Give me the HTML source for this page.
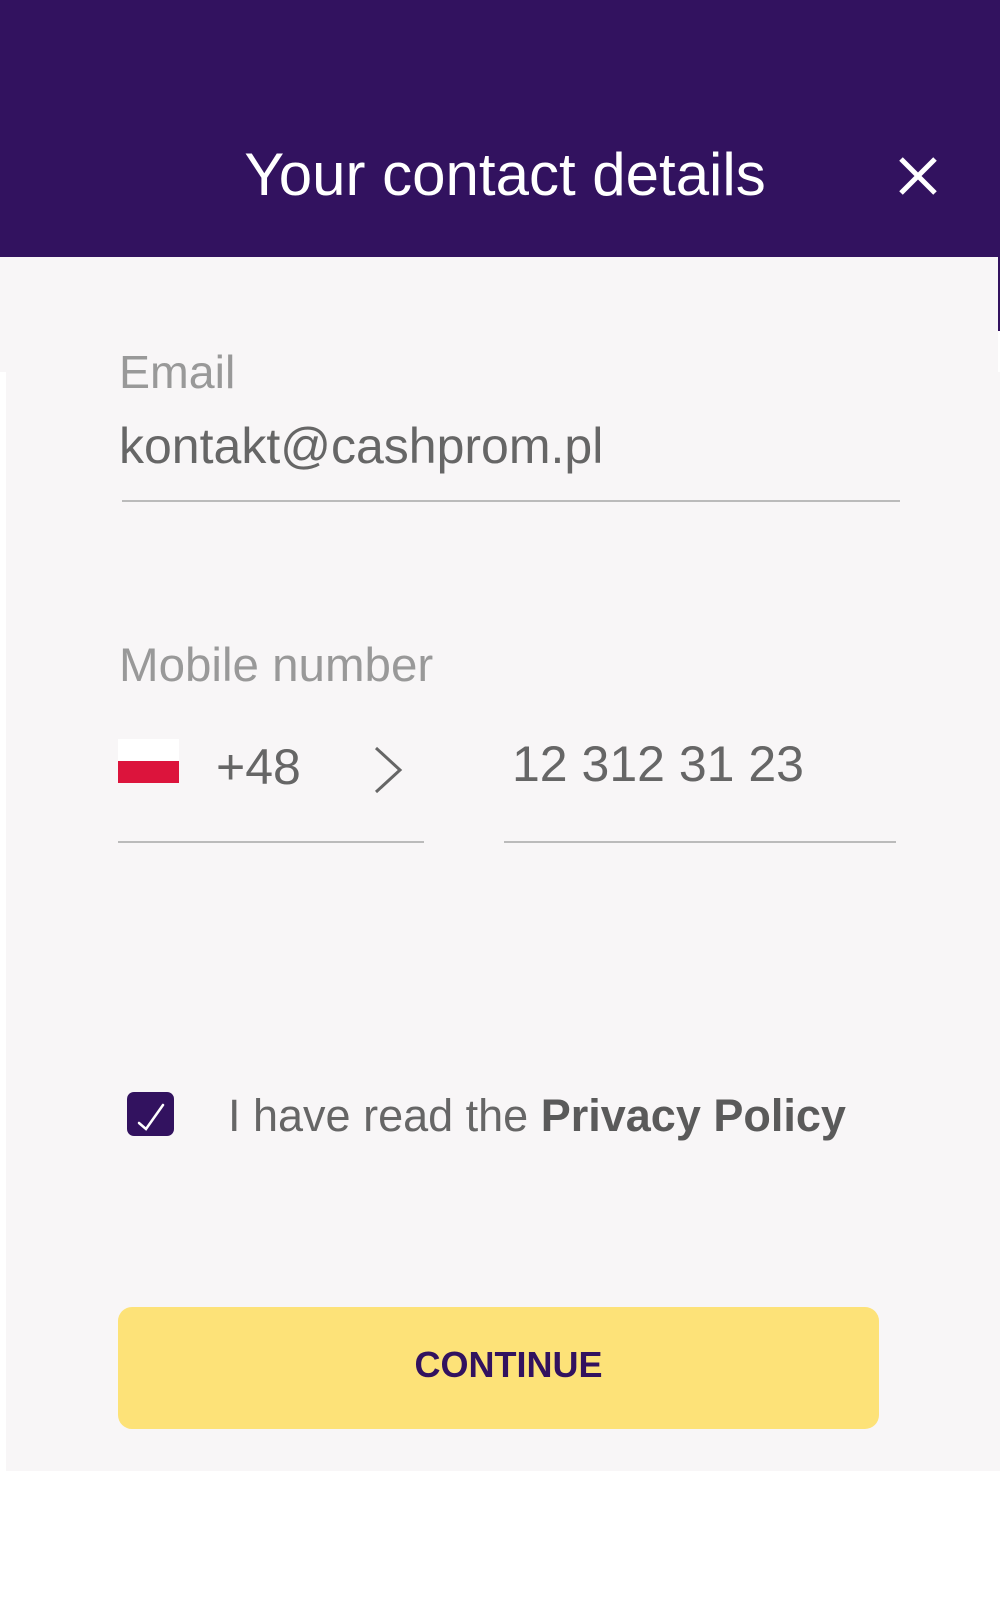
<!DOCTYPE html>
<html><head><meta charset="utf-8"><style>
html,body{margin:0;padding:0;width:1000px;height:1600px;background:#fff;overflow:hidden;font-family:"Liberation Sans",Arial,sans-serif;}
.abs{position:absolute}
</style></head><body>
<div class="abs" style="left:0;top:0;width:1000px;height:257px;background:#32125f"></div>
<div class="abs" style="left:0;top:257px;width:998px;height:115px;background:#f8f6f7"></div>
<div class="abs" style="left:998px;top:257px;width:2px;height:74px;background:#32125f"></div>
<div class="abs" style="left:6px;top:372px;width:994px;height:1099px;background:#f8f6f7"></div>
<div class="abs" style="left:0;top:140px;width:1010px;text-align:center;color:#fff;font-size:60px;line-height:70px">Your contact details</div>
<svg class="abs" style="left:898px;top:156px" width="40" height="40" viewBox="0 0 40 40"><path d="M3 3L37 37M37 3L3 37" stroke="#fff" stroke-width="5"/></svg>
<div class="abs" style="left:119px;top:344px;font-size:46.5px;line-height:56px;color:#999">Email</div>
<div class="abs" style="left:119px;top:416px;font-size:50px;line-height:60px;color:#666">kontakt@cashprom.pl</div>
<div class="abs" style="left:122px;top:500px;width:778px;height:2px;background:#bbb"></div>
<div class="abs" style="left:119px;top:638px;font-size:47.5px;line-height:56px;color:#999">Mobile number</div>
<div class="abs" style="left:118px;top:739px;width:61px;height:22px;background:#fff"></div>
<div class="abs" style="left:118px;top:761px;width:61px;height:22px;background:#dc143c"></div>
<div class="abs" style="left:216px;top:737px;font-size:50px;line-height:60px;color:#666">+48</div>
<svg class="abs" style="left:372px;top:746px" width="32" height="48" viewBox="0 0 32 48"><path d="M4 2L28 24L4 46" fill="none" stroke="#666" stroke-width="3"/></svg>
<div class="abs" style="left:118px;top:841px;width:306px;height:2px;background:#bbb"></div>
<div class="abs" style="left:512px;top:734px;font-size:50px;line-height:60px;color:#666">12 312 31 23</div>
<div class="abs" style="left:504px;top:841px;width:392px;height:2px;background:#bbb"></div>
<div class="abs" style="left:127px;top:1092px;width:47px;height:44px;background:#32125f;border-radius:7px"></div>
<svg class="abs" style="left:127px;top:1092px" width="47" height="44" viewBox="0 0 47 44"><path d="M12 31L19 37L36 13" fill="none" stroke="#fff" stroke-width="2.5" stroke-linecap="round"/></svg>
<div class="abs" style="left:228px;top:1087px;font-size:45px;line-height:58px;color:#666;white-space:nowrap">I have read the <b style="color:#5a5a5a">Privacy Policy</b></div>
<div class="abs" style="left:118px;top:1307px;width:761px;height:122px;background:#fde278;border-radius:14px;text-align:center;line-height:116px;font-weight:bold;font-size:36px;color:#32125f"><span style="position:relative;left:10px">CONTINUE</span></div>
</body></html>
